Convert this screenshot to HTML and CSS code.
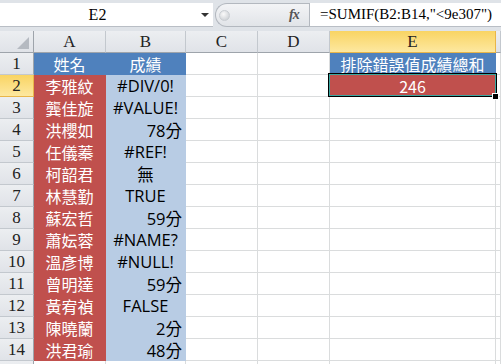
FILE: index.html
```html
<!DOCTYPE html>
<html lang="zh-Hant">
<head>
  <meta charset="UTF-8">
  <title>SUMIF 排除錯誤值</title>
  <link rel="stylesheet" href="styles.css">
</head>
<body>
  <div class="formula-bar">
    <div class="name-box">
      <span class="name-text">E2</span>
      <span class="drop-arrow"></span>
    </div>
    <div class="tools">
      <span class="grip"></span>
      <span class="fx">fx</span>
    </div>
    <div class="formula-input">=SUMIF(B2:B14,"&lt;9e307")</div>
  </div>

  <div class="sheet">
    <!-- column headers -->
    <div class="cell corner">
      <svg width="12" height="12" viewBox="0 0 12 12"><polygon points="12,0 12,12 0,12" fill="#b5bac1"/></svg>
    </div>
    <div class="cell col-head">A</div>
    <div class="cell col-head">B</div>
    <div class="cell col-head">C</div>
    <div class="cell col-head">D</div>
    <div class="cell col-head sel">E</div>
    <div class="cell col-head"></div>

    <div class="cell row-head">1</div>
    <div class="cell blue">姓名</div>
    <div class="cell blue">成績</div>
    <div class="cell"></div><div class="cell"></div>
    <div class="cell blue">排除錯誤值成績總和</div>
    <div class="cell"></div>

    <div class="cell row-head sel">2</div>
    <div class="cell red">李雅紋</div>
    <div class="cell lblue">#DIV/0!</div>
    <div class="cell"></div><div class="cell"></div>
    <div class="cell red active">246<span class="handle"></span></div>
    <div class="cell"></div>

    <div class="cell row-head">3</div>
    <div class="cell red">龔佳旋</div>
    <div class="cell lblue">#VALUE!</div>
    <div class="cell"></div><div class="cell"></div><div class="cell"></div><div class="cell"></div>

    <div class="cell row-head">4</div>
    <div class="cell red">洪櫻如</div>
    <div class="cell lblue num">78分</div>
    <div class="cell"></div><div class="cell"></div><div class="cell"></div><div class="cell"></div>

    <div class="cell row-head">5</div>
    <div class="cell red">任儀蓁</div>
    <div class="cell lblue">#REF!</div>
    <div class="cell"></div><div class="cell"></div><div class="cell"></div><div class="cell"></div>

    <div class="cell row-head">6</div>
    <div class="cell red">柯韶君</div>
    <div class="cell lblue">無</div>
    <div class="cell"></div><div class="cell"></div><div class="cell"></div><div class="cell"></div>

    <div class="cell row-head">7</div>
    <div class="cell red">林慧勤</div>
    <div class="cell lblue">TRUE</div>
    <div class="cell"></div><div class="cell"></div><div class="cell"></div><div class="cell"></div>

    <div class="cell row-head">8</div>
    <div class="cell red">蘇宏哲</div>
    <div class="cell lblue num">59分</div>
    <div class="cell"></div><div class="cell"></div><div class="cell"></div><div class="cell"></div>

    <div class="cell row-head">9</div>
    <div class="cell red">蕭妘蓉</div>
    <div class="cell lblue">#NAME?</div>
    <div class="cell"></div><div class="cell"></div><div class="cell"></div><div class="cell"></div>

    <div class="cell row-head">10</div>
    <div class="cell red">溫彥博</div>
    <div class="cell lblue">#NULL!</div>
    <div class="cell"></div><div class="cell"></div><div class="cell"></div><div class="cell"></div>

    <div class="cell row-head">11</div>
    <div class="cell red">曾明達</div>
    <div class="cell lblue num">59分</div>
    <div class="cell"></div><div class="cell"></div><div class="cell"></div><div class="cell"></div>

    <div class="cell row-head">12</div>
    <div class="cell red">黃宥禎</div>
    <div class="cell lblue">FALSE</div>
    <div class="cell"></div><div class="cell"></div><div class="cell"></div><div class="cell"></div>

    <div class="cell row-head">13</div>
    <div class="cell red">陳曉蘭</div>
    <div class="cell lblue num">2分</div>
    <div class="cell"></div><div class="cell"></div><div class="cell"></div><div class="cell"></div>

    <div class="cell row-head">14</div>
    <div class="cell red">洪君瑜</div>
    <div class="cell lblue num">48分</div>
    <div class="cell"></div><div class="cell"></div><div class="cell"></div><div class="cell"></div>

    <div class="cell row-head"></div>
    <div class="cell"></div><div class="cell"></div><div class="cell"></div><div class="cell"></div><div class="cell"></div><div class="cell"></div>
  </div>
</body>
</html>
```

FILE: styles.css
```css
html, body {
  height: 364px;
  overflow: hidden;
}

body {
  margin: 0;
  background: #fff;
  font-family: "Noto Sans CJK TC", "Noto Sans", sans-serif;
  color: #000;
}

/* formula bar */
.formula-bar {
  display: flex;
  align-items: flex-start;
  height: 31px;
  box-sizing: border-box;
  padding-top: 3px;
  background: #dfe3e8;
}

.name-box {
  display: flex;
  align-items: center;
  width: 213px;
  height: 24px;
  box-sizing: border-box;
  background: #fff;
  border-bottom: 1px solid #b9bec5;
}

.name-text {
  width: 195px;
  text-align: center;
  font-family: "Liberation Serif", serif;
  font-size: 16px;
}

.drop-arrow {
  margin-left: 6px;
  border-left: 4px solid transparent;
  border-right: 4px solid transparent;
  border-top: 4px solid #333;
}

.tools {
  display: flex;
  align-items: center;
  width: 94px;
  height: 24px;
  box-sizing: border-box;
  background: linear-gradient(#f3f4f6, #e1e4e8);
  border: 1px solid #b3b8bf;
  border-right: none;
  border-radius: 12px 0 0 12px;
  margin-left: 2px;
}

.grip {
  width: 9px;
  height: 9px;
  margin-left: 3px;
  border-radius: 50%;
  background: radial-gradient(circle at 40% 35%, #fafafa, #c4c8cd);
  border: 1px solid #c9cdd2;
}

.fx {
  margin-left: 59px;
  font-family: "Liberation Serif", serif;
  font-style: italic;
  font-weight: bold;
  font-size: 14px;
  color: #555;
  letter-spacing: -1px;
}

.formula-input {
  flex: 1;
  height: 24px;
  box-sizing: border-box;
  background: #fff;
  border-left: 1px solid #b3b8bf;
  border-bottom: 1px solid #b9bec5;
  padding-left: 10px;
  font-family: "Liberation Serif", serif;
  font-size: 15px;
  line-height: 23px;
  white-space: nowrap;
}

/* sheet grid */
.sheet {
  display: grid;
  grid-template-columns: 34px 72px 80px 72px 72px 166px 1fr;
  grid-auto-rows: 22px;
  height: 333px;
  overflow: hidden;
}

.cell {
  position: relative;
  display: flex;
  align-items: center;
  justify-content: center;
  box-sizing: border-box;
  border-right: 1px solid #dadcdd;
  border-bottom: 1px solid #dadcdd;
  font-size: 16px;
  white-space: nowrap;
}

.corner,
.col-head,
.row-head {
  background: linear-gradient(#eceef1, #e0e3e8);
  font-family: "Liberation Serif", serif;
  font-size: 17px;
  color: #222;
}

.corner {
  align-items: flex-end;
  justify-content: flex-end;
  padding: 0 4px 3px 0;
  border-right: 1px solid #9ea4ab;
  border-bottom: 1px solid #9ea4ab;
}

.col-head {
  border-right: 1px solid #c3c8ce;
  border-bottom: 1px solid #9ea4ab;
}

.row-head {
  border-right: 1px solid #9ea4ab;
  border-bottom: 1px solid #c3c8ce;
}

.col-head.sel,
.row-head.sel {
  background: linear-gradient(#f9d463, #fde8a0);
  border-color: #e9b649;
}

.blue {
  background: #4f81bd;
  border-color: #4f81bd;
  color: #fff;
}

.red {
  background: #c0504d;
  border-color: #c0504d;
  color: #fff;
}

.lblue {
  background: #b8cce4;
  border-color: #b8cce4;
  font-family: "Open Sans", "Noto Sans CJK TC", sans-serif;
  font-size: 16.5px;
}

.num {
  justify-content: flex-end;
  padding-right: 3px;
}

/* active cell frame */
.active::after {
  content: "";
  position: absolute;
  top: -2px;
  left: -2px;
  right: -2px;
  bottom: -1px;
  border: 1px solid #000;
  box-shadow: inset 0 0 0 1px #3aa6a0;
  pointer-events: none;
}

.handle {
  position: absolute;
  right: -4px;
  bottom: -4px;
  width: 5px;
  height: 5px;
  background: #000;
  border: 1px solid #fff;
  z-index: 2;
}
```
